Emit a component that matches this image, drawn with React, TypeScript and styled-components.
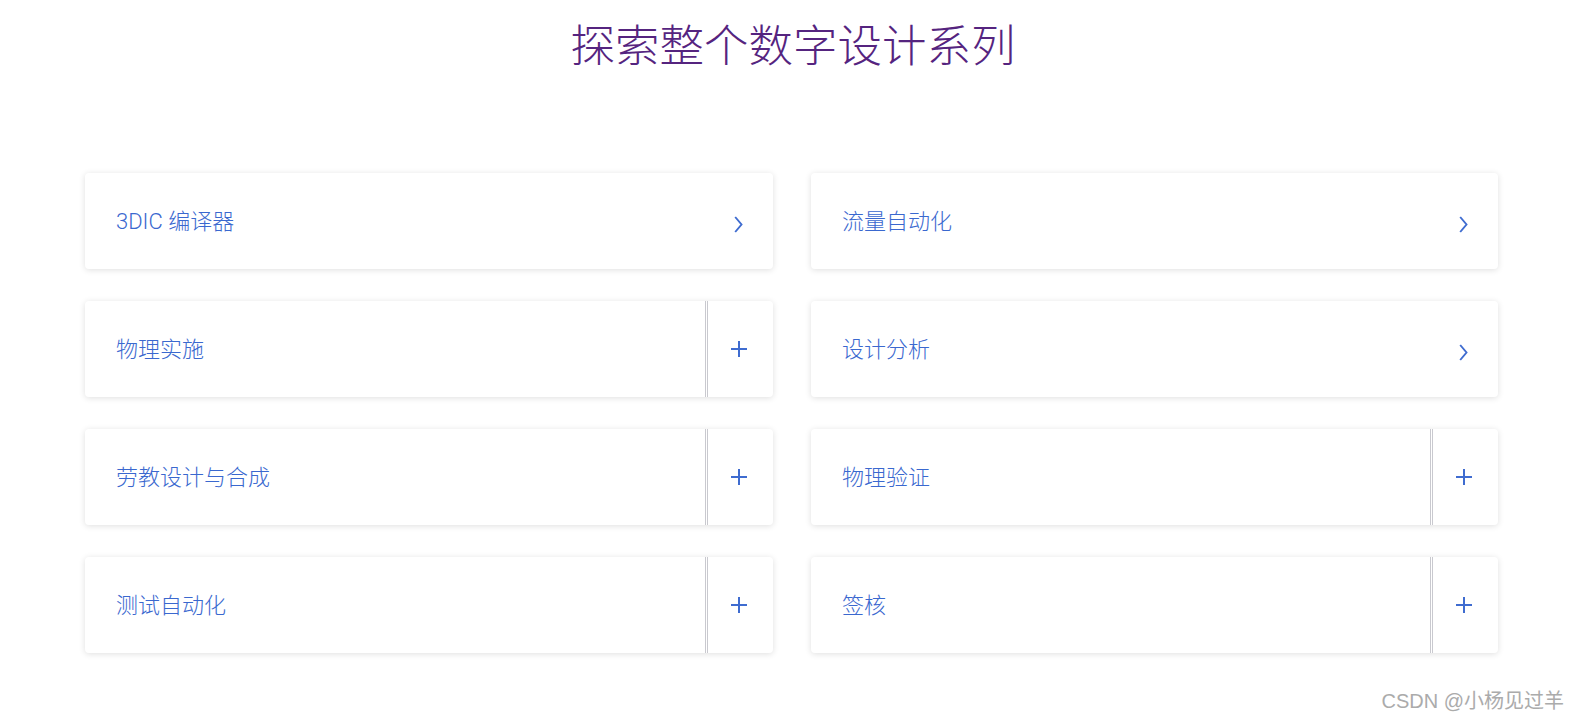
import React from "react";
import styled, { createGlobalStyle } from "styled-components";

const Global = createGlobalStyle`
  html, body { margin: 0; padding: 0; background: #ffffff; }
  body { font-family: Roboto, "Noto Sans CJK SC", sans-serif; }
`;

const Page = styled.div`
  position: relative;
  width: 1580px;
  height: 720px;
  background: #ffffff;
  overflow: hidden;
`;

const Title = styled.h1`
  margin: 0;
  padding-top: 16px;
  padding-left: 6px;
  text-align: center;
  font-family: "Noto Sans CJK SC", sans-serif;
  font-weight: 300;
  font-size: 44.5px;
  line-height: 53px;
  color: #55247f;
`;

const Grid = styled.section`
  display: grid;
  grid-template-columns: 688px 687px;
  grid-auto-rows: 96px;
  column-gap: 38px;
  row-gap: 32px;
  justify-content: center;
  margin-top: 104px;
  padding-left: 3px;
`;

const Card = styled.div`
  display: flex;
  align-items: stretch;
  background: #ffffff;
  border-radius: 4px;
  box-shadow: 0 1px 6px rgba(0, 0, 0, 0.13);
`;

const Label = styled.div`
  flex: 1;
  display: flex;
  align-items: center;
  padding-left: 31px;
  padding-bottom: 5px;
  font-family: Roboto, "Noto Sans CJK SC", sans-serif;
  font-size: 22px;
  font-weight: 300;
  color: #3a68cf;
`;

const Action = styled.div<{ $divided: boolean }>`
  width: 68px;
  box-sizing: border-box;
  padding-right: 4px;
  display: flex;
  align-items: center;
  justify-content: center;
  border-left: 3px ${(p) => (p.$divided ? "double #c9c9cf" : "solid transparent")};
  color: #3f6cd0;
`;

const Watermark = styled.div`
  position: absolute;
  right: 16px;
  bottom: 6px;
  font-family: "Liberation Sans", "Noto Sans CJK SC", sans-serif;
  font-size: 20px;
  color: #ababab;
  line-height: 26px;
`;

const Chevron = () => (
  <svg width="9" height="17" viewBox="0 0 9 17" style={{ marginTop: 6 }}>
    <path d="M1.2 1 L7.5 8.5 L1.2 16" fill="none" stroke="currentColor" strokeWidth="1.9" />
  </svg>
);

const Plus = () => (
  <svg width="16" height="16" viewBox="0 0 16 16">
    <path d="M8 0 V16 M0 8 H16" fill="none" stroke="currentColor" strokeWidth="2" />
  </svg>
);

type Item = { label: string; kind: "arrow" | "plus" };

const items: Item[] = [
  { label: "3DIC 编译器", kind: "arrow" },
  { label: "流量自动化", kind: "arrow" },
  { label: "物理实施", kind: "plus" },
  { label: "设计分析", kind: "arrow" },
  { label: "劳教设计与合成", kind: "plus" },
  { label: "物理验证", kind: "plus" },
  { label: "测试自动化", kind: "plus" },
  { label: "签核", kind: "plus" },
];

export default function App() {
  return (
    <Page>
      <Global />
      <Title>探索整个数字设计系列</Title>
      <Grid>
        {items.map((it) => (
          <Card key={it.label}>
            <Label>{it.label}</Label>
            <Action $divided={it.kind === "plus"}>
              {it.kind === "plus" ? <Plus /> : <Chevron />}
            </Action>
          </Card>
        ))}
      </Grid>
      <Watermark>CSDN @小杨见过羊</Watermark>
    </Page>
  );
}
